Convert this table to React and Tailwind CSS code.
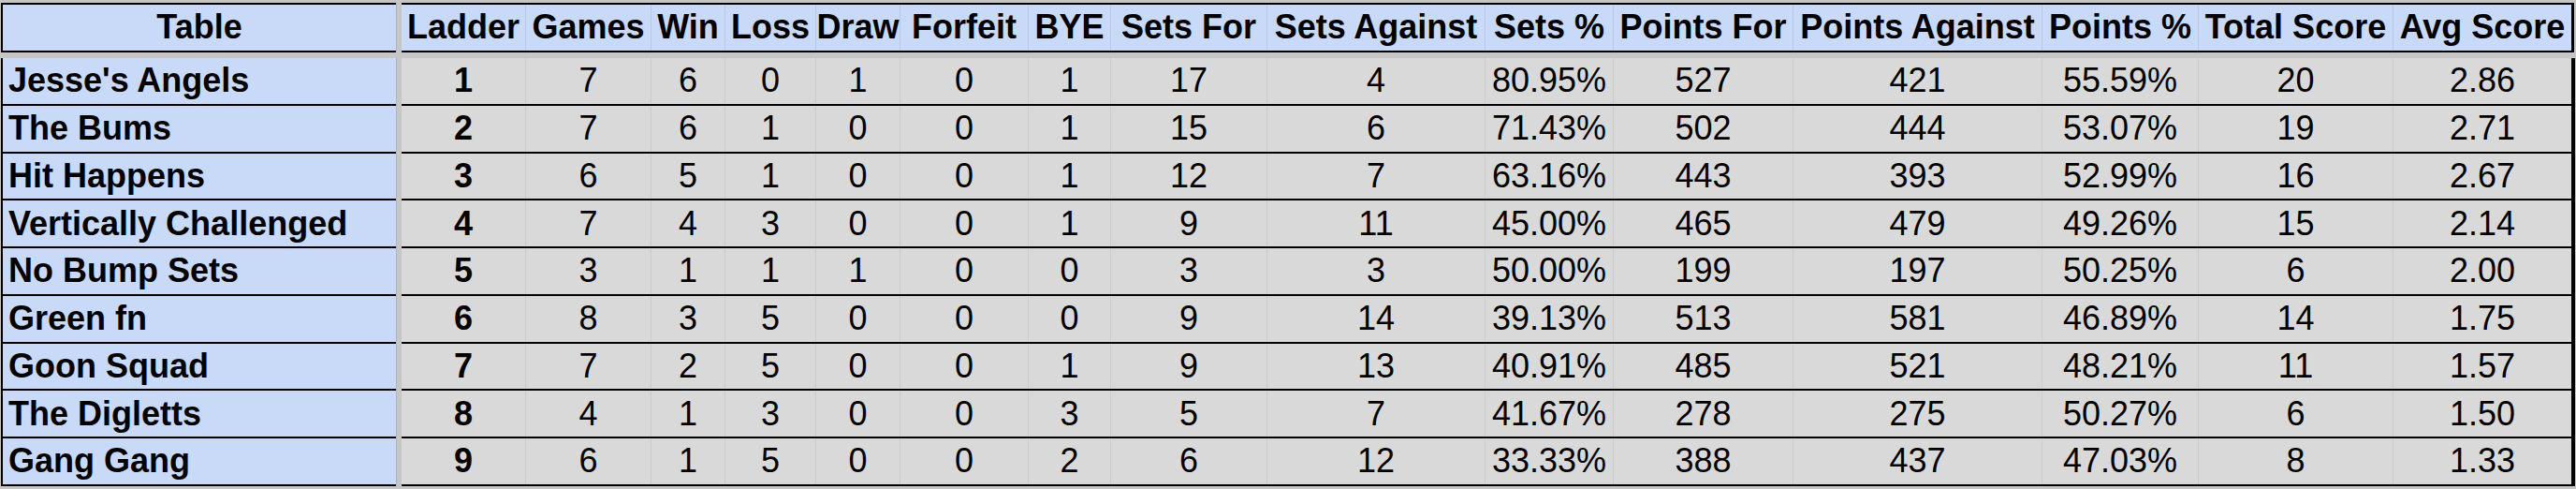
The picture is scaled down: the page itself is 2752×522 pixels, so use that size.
const columns = [
  { label: "Ladder", width: "w-[133px]", bold: true },
  { label: "Games", width: "w-[134px]" },
  { label: "Win", width: "w-[79px]" },
  { label: "Loss", width: "w-[97px]" },
  { label: "Draw", width: "w-[90px]" },
  { label: "Forfeit", width: "w-[137px]" },
  { label: "BYE", width: "w-[88px]" },
  { label: "Sets For", width: "w-[167px]" },
  { label: "Sets Against", width: "w-[233px]" },
  { label: "Sets %", width: "w-[137px]" },
  { label: "Points For", width: "w-[192px]" },
  { label: "Points Against", width: "w-[266px]" },
  { label: "Points %", width: "w-[167px]" },
  { label: "Total Score", width: "w-[208px]" },
  { label: "Avg Score", width: "w-[190px]" },
];

const teams = [
  ["Jesse's Angels", 1, 7, 6, 0, 1, 0, 1, 17, 4, "80.95%", 527, 421, "55.59%", 20, "2.86"],
  ["The Bums", 2, 7, 6, 1, 0, 0, 1, 15, 6, "71.43%", 502, 444, "53.07%", 19, "2.71"],
  ["Hit Happens", 3, 6, 5, 1, 0, 0, 1, 12, 7, "63.16%", 443, 393, "52.99%", 16, "2.67"],
  ["Vertically Challenged", 4, 7, 4, 3, 0, 0, 1, 9, 11, "45.00%", 465, 479, "49.26%", 15, "2.14"],
  ["No Bump Sets", 5, 3, 1, 1, 1, 0, 0, 3, 3, "50.00%", 199, 197, "50.25%", 6, "2.00"],
  ["Green fn", 6, 8, 3, 5, 0, 0, 0, 9, 14, "39.13%", 513, 581, "46.89%", 14, "1.75"],
  ["Goon Squad", 7, 7, 2, 5, 0, 0, 1, 9, 13, "40.91%", 485, 521, "48.21%", 11, "1.57"],
  ["The Digletts", 8, 4, 1, 3, 0, 0, 3, 5, 7, "41.67%", 278, 275, "50.27%", 6, "1.50"],
  ["Gang Gang", 9, 6, 1, 5, 0, 0, 2, 6, 12, "33.33%", 388, 437, "47.03%", 8, "1.33"],
];

function Divider() {
  return <div className="w-[6px] shrink-0 self-stretch border-l border-[#b3b3b3] bg-[#c6c6c6]" />;
}

function HeaderRow() {
  return (
    <div className="flex h-[52.5px]">
      <div className="flex w-[422px] shrink-0 items-center justify-center border-y-2 border-l-2 border-black bg-[#c9daf8] font-bold">
        Table
      </div>
      <Divider />
      <div className="flex border-y-2 border-r-[3px] border-black bg-[#c9daf8]">
        {columns.map((col, i) => (
          <div
            key={col.label}
            className={`flex ${col.width} shrink-0 items-center justify-center whitespace-nowrap font-bold ${
              i < columns.length - 1 ? "border-r border-[#b8c9e6]" : ""
            }`}
          >
            {col.label}
          </div>
        ))}
      </div>
    </div>
  );
}

function TeamRow({ row }) {
  const [name, ...values] = row;
  return (
    <div className="flex h-[50.75px]">
      <div className="flex w-[422px] shrink-0 items-center border-b-2 border-l-2 border-black bg-[#c9daf8] pl-[6px] font-bold">
        {name}
      </div>
      <Divider />
      <div className="flex border-b-2 border-r-[4px] border-black bg-[#d9d9d9]">
        {values.map((v, i) => (
          <div
            key={i}
            className={`flex ${columns[i].width} shrink-0 items-center justify-center whitespace-nowrap ${
              columns[i].bold ? "font-bold" : ""
            } ${i < values.length - 1 ? "border-r border-[#cbcbcb]" : ""}`}
          >
            {v}
          </div>
        ))}
      </div>
    </div>
  );
}

export default function App() {
  return (
    <div className="h-[522px] w-[2752px] overflow-hidden bg-[#c6c6c6] pl-[1px] pt-[3px] font-['Liberation_Sans',Arial,sans-serif] text-[36px] leading-none text-black">
      <HeaderRow />
      <div className="h-[6.5px]" />
      {teams.map((row) => (
        <TeamRow key={row[0]} row={row} />
      ))}
    </div>
  );
}
